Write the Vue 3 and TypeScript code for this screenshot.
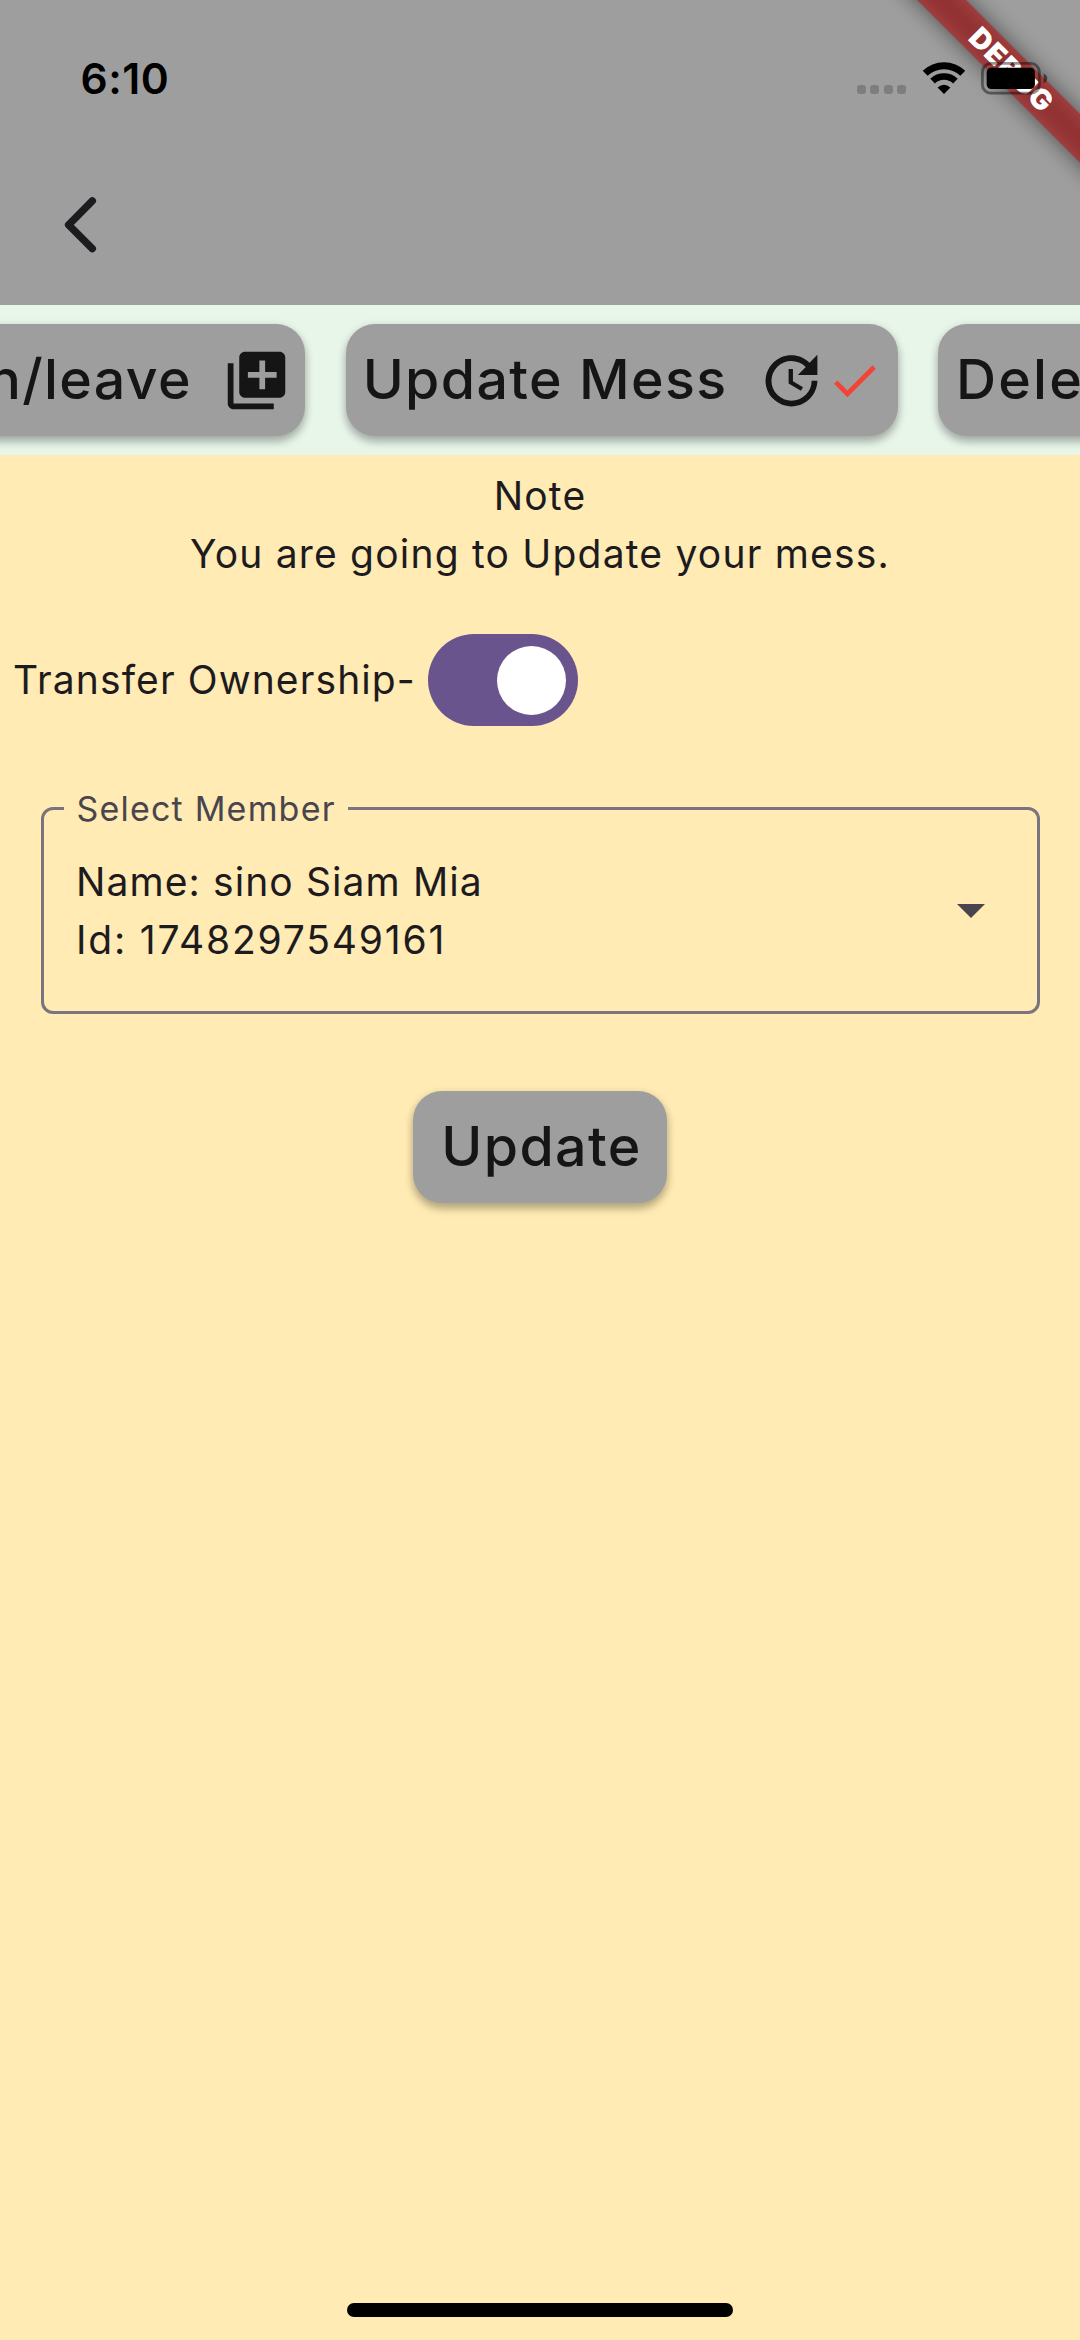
<script setup lang="ts">
import { ref } from 'vue'

interface Member {
  name: string
  id: string
}

const transferOwnership = ref<boolean>(true)
const member = ref<Member>({ name: 'sino Siam Mia', id: '1748297549161' })
const signalDots: number[] = [0, 1, 2, 3]
</script>

<template>
  <div class="screen">
    <header class="app-bar">
      <div class="status">
        <span class="time">6:10</span>
        <div class="indicators">
          <div class="signal">
            <i v-for="dot in signalDots" :key="dot"></i>
          </div>
          <svg class="wifi" width="44" height="33" viewBox="0 0 44 33">
            <path d="M3.2 12.2A27 27 0 0 1 40.8 12.2" fill="none" stroke="#000" stroke-width="7" transform="translate(0 -.9)" />
            <path d="M10.6 20A16.5 16.5 0 0 1 33.4 20" fill="none" stroke="#000" stroke-width="6.6" transform="translate(0 -.9)" />
            <path d="M22 32L15.6 25.6Q22 20 28.4 25.6Z" />
          </svg>
          <svg class="battery" width="68" height="33" viewBox="0 0 68 33">
            <rect x="1.4" y="1.4" width="57" height="29.8" rx="8.5" fill="none" stroke="#000" stroke-opacity=".42" stroke-width="2.8" />
            <rect x="5.7" y="5.7" width="48.2" height="21.3" rx="4.6" />
            <path d="M62.6 11.4Q66.2 13 66.2 16.3T62.6 21.2Z" fill-opacity=".5" />
          </svg>
        </div>
      </div>
      <button class="back" aria-label="Back">
        <svg width="36" height="60" viewBox="0 0 36 60">
          <path d="M30.3 5.9L6.6 29.8L30.3 53.7" fill="none" stroke="#1d1b20" stroke-width="7.4" stroke-linecap="round" stroke-linejoin="round" />
        </svg>
      </button>
    </header>

    <svg class="banner" width="220" height="220" viewBox="860 0 220 220">
      <defs>
        <filter id="soft" x="-20%" y="-150%" width="140%" height="400%">
          <feGaussianBlur stdDeviation="11" />
        </filter>
      </defs>
      <g transform="translate(1010.8 69.2) rotate(45)">
        <rect x="-160" y="-17.3" width="320" height="34.6" fill="#000" fill-opacity=".5" filter="url(#soft)" />
        <rect x="-160" y="-17.3" width="320" height="34.6" fill="#b71c1c" fill-opacity=".627" />
        <text class="banner-text" x="1" y="9.8" text-anchor="middle" transform="scale(1.04 1)">DEBUG</text>
      </g>
    </svg>

    <nav class="tabs">
      <button class="chip first">
        <span>Join/leave</span>
        <svg width="69" height="69" viewBox="0 0 24 24">
          <path d="M4 6H2v14c0 1.1.9 2 2 2h14v-2H4V6zm16-4H8c-1.1 0-2 .9-2 2v12c0 1.1.9 2 2 2h12c1.1 0 2-.9 2-2V4c0-1.1-.9-2-2-2zm-1 9h-4v4h-2v-4H9V9h4V5h2v4h4v2z" />
        </svg>
      </button>
      <button class="chip active">
        <span>Update Mess</span>
        <svg width="69" height="69" viewBox="0 0 24 24">
          <path d="M21 10.12h-6.78l2.74-2.82c-2.73-2.7-7.15-2.8-9.88-.1-2.73 2.71-2.73 7.08 0 9.79s7.15 2.71 9.88 0C18.32 15.65 19 14.08 19 12.1h2c0 1.98-.88 4.55-2.64 6.29-3.51 3.48-9.21 3.48-12.72 0-3.5-3.47-3.53-9.11-.02-12.58s9.14-3.47 12.65 0L21 3v7.12zM12.5 8v4.25l3.5 2.08-.72 1.21L11 13V8h1.5z" />
        </svg>
        <svg class="check" width="57" height="57" viewBox="0 0 24 24">
          <path d="M9 16.17L4.83 12l-1.42 1.41L9 19 21 7l-1.41-1.41z" />
        </svg>
      </button>
      <button class="chip last">
        <span>Delete Mess</span>
      </button>
    </nav>

    <main class="body">
      <p class="note">Note</p>
      <p class="note message">You are going to Update your mess.</p>

      <div class="transfer">
        <span class="transfer-label">Transfer Ownership-</span>
        <button class="switch" :class="{ on: transferOwnership }" role="switch" @click="transferOwnership = !transferOwnership">
          <i></i>
        </button>
      </div>

      <fieldset class="field">
        <legend><span>Select Member</span></legend>
        <div class="value">
          <div class="name">Name: {{ member.name }}</div>
          <div class="ident">Id: {{ member.id }}</div>
        </div>
        <svg class="arrow" width="28" height="14" viewBox="0 0 28 14">
          <path d="M0 0H28L14 14Z" />
        </svg>
      </fieldset>

      <button class="chip submit"><span>Update</span></button>
    </main>

    <footer class="home"><i></i></footer>
  </div>
</template>

<style>
html,
body {
  margin: 0;
  background: #ffebb3;
}
</style>

<style scoped>
.screen {
  position: relative;
  display: flex;
  flex-direction: column;
  width: 1080px;
  height: 2340px;
  overflow: hidden;
  background: #ffebb3;
  color: #1d1b20;
  font-family: Inter, 'Liberation Sans', sans-serif;
}
button {
  border: 0;
  padding: 0;
  background: none;
  color: inherit;
  font: inherit;
}
svg {
  display: block;
  flex: none;
}
.app-bar {
  height: 305px;
  background: #9e9e9e;
}
.status {
  display: flex;
  justify-content: space-between;
  height: 157px;
  padding: 0 31px 0 80.5px;
  color: #000;
}
.time {
  font-size: 42.5px;
  font-weight: 600;
  line-height: 50px;
  letter-spacing: 0.5px;
  margin-top: 54px;
}
.indicators {
  position: relative;
  z-index: 2;
  display: flex;
  align-items: flex-start;
  padding-top: 62px;
}
.signal {
  display: flex;
  gap: 4.5px;
  margin: 23px 15.5px 0 0;
}
.signal i {
  width: 9px;
  height: 9px;
  border-radius: 3px;
  background: #7e7e7e;
}
.wifi {
  margin-right: 15.5px;
}
.back {
  display: block;
  margin: 38px 0 0 62px;
}
.banner {
  position: absolute;
  z-index: 1;
  top: 0;
  right: 0;
}
.banner-text {
  fill: #fff;
  font-size: 28px;
  font-weight: 900;
  letter-spacing: 1px;
}
.tabs {
  display: flex;
  gap: 40.5px;
  height: 131px;
  padding-top: 19px;
  background: #e8f5e9;
  overflow: hidden;
}
.chip {
  display: flex;
  flex: none;
  align-items: center;
  box-sizing: border-box;
  height: 112px;
  border-radius: 29px;
  background: #9e9e9e;
  box-shadow: 0 3px 3px -6px rgba(0, 0, 0, 0.2), 0 6px 9px rgba(0, 0, 0, 0.24), 0 2px 10px rgba(0, 0, 0, 0.12);
  color: #151515;
  font-size: 55.5px;
  font-weight: 500;
  line-height: 72px;
  letter-spacing: 1.35px;
  white-space: nowrap;
}
.chip span {
  padding-bottom: 2px;
}
.chip svg {
  fill: #151515;
}
.chip .check {
  fill: #f44336;
}
.first {
  justify-content: flex-end;
  width: 400px;
  margin-left: -95px;
  padding-right: 14.5px;
}
.first svg {
  margin-left: 29.5px;
}
.active {
  justify-content: flex-end;
  width: 552px;
  padding-right: 14.5px;
}
.active span {
  margin-right: 29.5px;
}
.last {
  width: 500px;
  padding-left: 18px;
  letter-spacing: 2.2px;
}
.body {
  display: flex;
  flex-direction: column;
  padding-top: 12px;
  font-size: 39px;
  line-height: 57.6px;
}
.note {
  margin: 0;
  text-align: center;
  letter-spacing: 1.2px;
}
.transfer {
  display: flex;
  align-items: center;
  height: 92px;
  margin-top: 52px;
  padding-left: 13px;
}
.transfer-label {
  width: 414.5px;
  white-space: nowrap;
  letter-spacing: 1.1px;
}
.switch {
  display: flex;
  align-items: center;
  box-sizing: border-box;
  width: 150px;
  height: 92px;
  padding: 0 11.5px;
  border-radius: 46px;
  background: #9e9e9e;
}
.switch.on {
  justify-content: flex-end;
  background: #69548d;
}
.switch i {
  width: 69px;
  height: 69px;
  border-radius: 50%;
  background: #fff;
}
.field {
  display: flex;
  align-items: center;
  justify-content: space-between;
  box-sizing: border-box;
  width: 999px;
  height: 227px;
  margin: 61px 0 0 40.5px;
  padding: 24px 52px 0 20px;
  border: 3px solid #79747e;
  border-radius: 12px;
}
.field legend {
  box-sizing: border-box;
  width: 284px;
  padding: 0 0 0 13px;
  color: #49454f;
  font-size: 34px;
  line-height: 42px;
  letter-spacing: 1.2px;
  white-space: nowrap;
}
.field legend span {
  display: block;
  padding-top: 2px;
  line-height: 40px;
}
.value {
  margin-left: 12.5px;
  letter-spacing: 1.1px;
}
.ident {
  letter-spacing: 1.8px;
}
.arrow {
  fill: #49454f;
}
.submit {
  align-self: center;
  justify-content: center;
  width: 254px;
  margin-top: 77px;
  padding-left: 3px;
}
.home {
  position: absolute;
  left: 0;
  right: 0;
  bottom: 23px;
  display: flex;
  justify-content: center;
}
.home i {
  width: 386px;
  height: 14.5px;
  border-radius: 8px;
  background: #000;
}
</style>
